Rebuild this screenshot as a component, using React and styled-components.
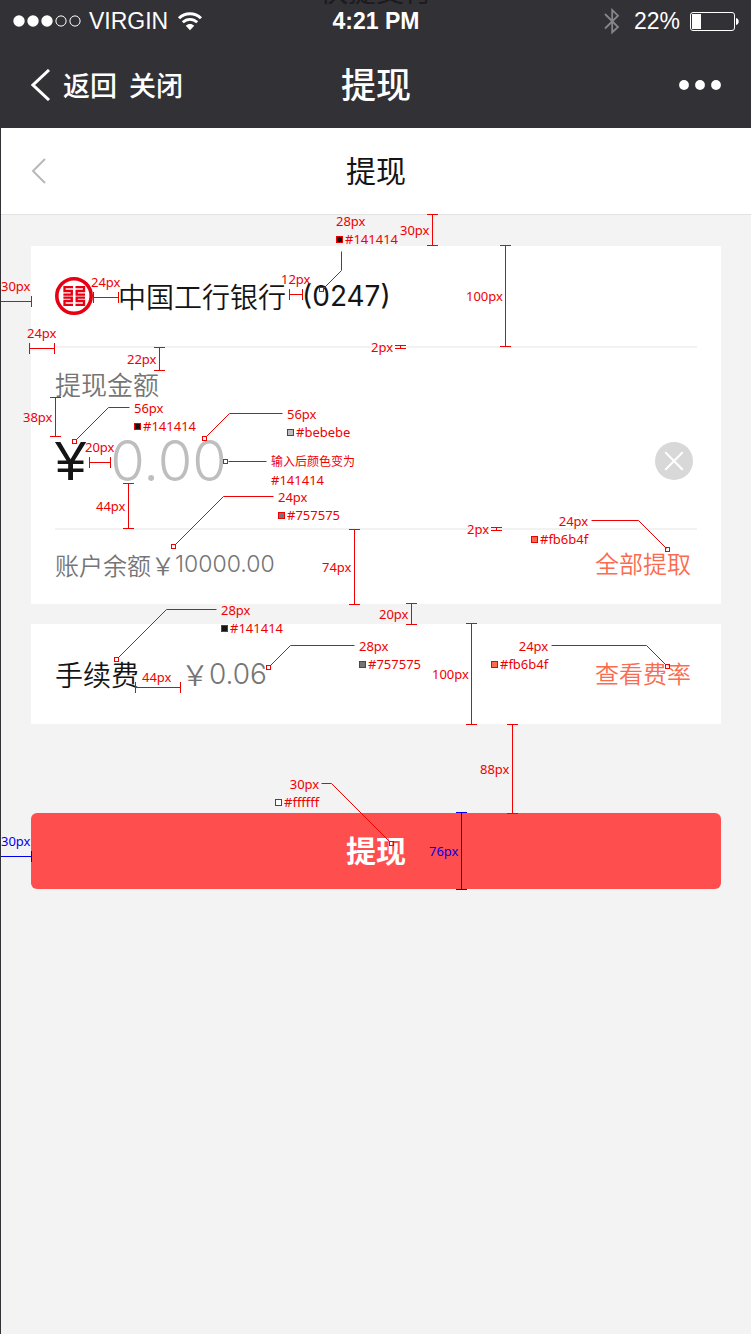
import React from "react";
import styled, { createGlobalStyle } from "styled-components";

const cjk = '"Noto Sans CJK SC", sans-serif';

const GlobalStyle = createGlobalStyle`
  *, *::before, *::after { box-sizing: border-box; }
  body { margin: 0; background: #f3f3f3; font-family: ${cjk}; color: #141414; }
  h1, h2, p { margin: 0; font-weight: 400; }
  button, input { font: inherit; color: inherit; border: 0; padding: 0; margin: 0; background: none; }
  a { color: inherit; text-decoration: none; }
  svg { display: block; flex: none; }
`;

const Page = styled.div`
  position: relative;
  min-height: 100vh;
  border-left: 1px solid #323136;
  overflow: hidden;
`;

const TopArea = styled.header`
  position: relative;
  background: #323136;
  color: #fff;
`;

const GhostTitle = styled.div`
  position: absolute;
  inset: 0 0 auto;
  height: 6px;
  overflow: hidden;
  display: flex;
  justify-content: center;
  align-items: flex-end;
  font-size: 28px;
  line-height: 32px;
  color: #1c1b1f;
`;

const Bar = styled.div`
  display: grid;
  grid-template-columns: 1fr auto 1fr;
  align-items: center;
  height: ${(p) => p.$height}px;
  padding: ${(p) => p.$pad};
`;

const StatusBar = styled(Bar)`
  font-family: "Liberation Sans", Arial, sans-serif;
  font-size: 23px;
  line-height: 28px;
`;

const Group = styled.div`
  display: flex;
  align-items: center;
  gap: ${(p) => p.$gap || 0}px;
  justify-content: ${(p) => (p.$end ? "flex-end" : "flex-start")};
`;

const Clock = styled.strong`
  font-weight: 700;
`;

const NavLink = styled.button`
  display: flex;
  align-items: center;
  gap: 12px;
  cursor: pointer;
  && { font-size: 27px; line-height: 40px; font-weight: 500; }
`;

const NavTitle = styled.h1`
  && { font-weight: 500; }
  padding-bottom: 4px;
  font-size: 35px;
  line-height: 52px;
`;

const SubHeader = styled(Bar)`
  background: #fff;
  border-bottom: 1px solid #e2e2e2;
`;

const SubTitle = styled.h2`
  padding-bottom: 4px;
  font-size: 30px;
  line-height: 44px;
`;

const Content = styled.main`
  padding: 31px 30px 40px;
`;

const Card = styled.section`
  background: #fff;
  padding: 0 24px;
  margin-bottom: 20px;
`;

const Row = styled.div`
  display: flex;
  align-items: center;
  height: ${(p) => p.$height}px;
  padding: 0 6px ${(p) => p.$lift || 0}px 0;
  font-size: ${(p) => p.$size}px;
  font-weight: 350;
  color: ${(p) => p.$color || "#141414"};
`;

const BankName = styled.span`
  margin: 0 16px 0 25px;
`;

const Digits = styled.span`
  font-family: Inter, ${cjk};
  font-weight: ${(p) => p.$weight || 400};
  font-size: ${(p) => p.$size}px;
`;

const FeeAmount = styled.span`
  display: flex;
  align-items: center;
  margin-left: 42px;
  color: #757575;
`;

const ActionLink = styled.a`
  margin-left: auto;
  padding-bottom: 4px;
  font-size: 24px;
  color: #fb6b4f;
`;

const AmountBlock = styled.div`
  height: 184px;
  padding-top: 17px;
  border-top: 2px solid #f2f2f2;
  border-bottom: 2px solid #f2f2f2;
`;

const AmountLabel = styled.label`
  display: block;
  font-size: 26px;
  line-height: 38px;
  font-weight: 350;
  color: #757575;
`;

const AmountRow = styled.div`
  display: flex;
  align-items: center;
  height: 72px;
  margin-top: 22px;
  padding-right: 4px;
`;

const Yen = styled.span`
  font-family: "Liberation Sans", Arial, sans-serif;
  font-size: 56px;
  line-height: 72px;
`;

const AmountInput = styled.input`
  flex: 1;
  min-width: 0;
  height: 72px;
  outline: none;
  && { margin-left: 24px; font-family: Inter, sans-serif; font-size: 56px; font-weight: 300; }
  &::placeholder { color: #bebebe; opacity: 1; }
`;

const IconButton = styled.button`
  cursor: pointer;
`;

const SubmitButton = styled.button`
  display: block;
  width: 100%;
  height: 76px;
  border-radius: 6px;
  cursor: pointer;
  && {
    margin-top: 89px;
    padding-bottom: 4px;
    background: #ff4e4e;
    color: #fff;
    font-size: 30px;
    font-weight: 700;
  }
`;

const NoteLayer = styled.div`
  position: absolute;
  inset: 0;
  margin-left: -1px;
  pointer-events: none;
  font-family: "Noto Sans", "Noto Sans CJK SC", sans-serif;
  font-size: 13px;
  line-height: 18px;
`;

const NoteLines = styled.svg`
  position: absolute;
  inset: 0;
  width: 100%;
  height: 100%;
`;

const Note = styled.div`
  position: absolute;
  left: ${(p) => p.$x}px;
  top: ${(p) => p.$y}px;
  display: flex;
  flex-direction: column;
  align-items: ${(p) => (p.$end ? "flex-end" : "flex-start")};
  color: ${(p) => p.$color || "#f00000"};
  white-space: nowrap;
`;

const NoteColor = styled.span`
  display: flex;
  align-items: center;
  gap: 2px;
`;

const NoteHint = styled.span`
  font-size: 12px;
`;

const Swatch = styled.i`
  width: 7px;
  height: 7px;
  border: 1px solid #f00000;
  background: ${(p) => p.$color};
`;

const RED = "#f00000";
const BLUE = "#0000f0";

const vertical = [
  [432, 214, 245], [505, 245, 346], [159, 347, 370], [55, 397, 436],
  [128, 483, 528], [354, 529, 604], [411, 603, 624], [471, 623, 724],
  [512, 724, 813], [400, 345, 348], [496, 527, 530], [461, 812, 889, BLUE],
];

const horizontal = [
  [301, 0, 31], [348, 29, 54], [297, 93, 118], [294, 289, 302],
  [462, 89, 110], [687, 135, 180], [856, 0, 31, BLUE],
];

const leaders = [
  ["341,251 341,270 323,288", 321, 289],
  ["129,407 108,407 76,439", 74, 441],
  ["282,413 229,413 206,436", 204, 438],
  ["266,461 228,461", 225, 461],
  ["273,496 223,496 175,544", 173, 546],
  ["591,520 638,520 666,548", 667, 549],
  ["216,609 166,609 118,657", 116, 659],
  ["354,645 290,645 270,665", 268, 667],
  ["551,645 646,645 665,664", 667, 666],
  ["321,783 331,783 389,841", 391, 843],
];

const notes = [
  { x: 336, y: 212, text: "28px", color: "#141414" },
  { x: 400, y: 221, text: "30px" },
  { x: 466, y: 287, text: "100px" },
  { x: 281, y: 270, text: "12px" },
  { x: 371, y: 338, text: "2px" },
  { x: 91, y: 273, text: "24px" },
  { x: 1, y: 277, text: "30px" },
  { x: 27, y: 324, text: "24px" },
  { x: 127, y: 350, text: "22px" },
  { x: 23, y: 408, text: "38px" },
  { x: 134, y: 399, text: "56px", color: "#141414" },
  { x: 85, y: 438, text: "20px" },
  { x: 96, y: 497, text: "44px" },
  { x: 287, y: 405, text: "56px", color: "#bebebe" },
  { x: 278, y: 488, text: "24px", color: "#757575" },
  { x: 322, y: 558, text: "74px" },
  { x: 467, y: 520, text: "2px" },
  { x: 531, y: 512, text: "24px", color: "#fb6b4f", end: true },
  { x: 221, y: 601, text: "28px", color: "#141414" },
  { x: 142, y: 668, text: "44px" },
  { x: 359, y: 637, text: "28px", color: "#757575" },
  { x: 379, y: 605, text: "20px" },
  { x: 432, y: 665, text: "100px" },
  { x: 491, y: 637, text: "24px", color: "#fb6b4f", end: true },
  { x: 480, y: 760, text: "88px" },
  { x: 275, y: 775, text: "30px", color: "#ffffff", end: true },
  { x: 429, y: 842, text: "76px", ink: BLUE },
  { x: 1, y: 832, text: "30px", ink: BLUE },
];

function Annotations() {
  return (
    <NoteLayer>
      <NoteLines fill="none" stroke={RED}>
        <g transform="translate(0.5 0.5)">
          {vertical.map(([x, a, b, c]) => (
            <path key={`v${x}-${a}`} stroke={c || RED} strokeLinecap="square"
              d={`M${x} ${a}V${b}M${x - 5} ${a}h10M${x - 5} ${b}h10`} />
          ))}
          {horizontal.map(([y, a, b, c]) => (
            <path key={`h${y}-${a}`} stroke={c || RED} strokeLinecap="square"
              d={`M${a} ${y}H${b}M${a} ${y - 5}v10M${b} ${y - 5}v10`} />
          ))}
          {leaders.map(([points, x, y]) => (
            <g key={points}>
              <polyline points={points} />
              <rect x={x - 2} y={y - 2} width="4" height="4" />
            </g>
          ))}
        </g>
      </NoteLines>
      {notes.map((n) => (
        <Note key={`${n.x}-${n.y}`} $x={n.x} $y={n.y} $end={n.end} $color={n.ink}>
          <span>{n.text}</span>
          {n.color && (
            <NoteColor><Swatch $color={n.color} />{n.color}</NoteColor>
          )}
        </Note>
      ))}
      <Note $x={271} $y={453}>
        <NoteHint>输入后颜色变为</NoteHint>
        <span>#141414</span>
      </Note>
    </NoteLayer>
  );
}

const Signal = () => (
  <svg width="68" height="12" viewBox="0 0 68 12" aria-hidden="true">
    {[6, 20, 34].map((x) => <circle key={x} cx={x} cy="6" r="5.7" fill="#fff" />)}
    {[48, 62].map((x) => <circle key={x} cx={x} cy="6" r="5.1" fill="none" stroke="#fff" />)}
  </svg>
);

const Wifi = () => (
  <svg width="26" height="19" viewBox="-2 0 26 19" fill="none" stroke="#fff" aria-hidden="true">
    <path d="M1 6.300C7 .1 17 .1 23 6.300" strokeWidth="3" />
    <path d="M4.800 10.300C9 6.300 15 6.300 19.200 10.300" strokeWidth="2.8" />
    <path d="M7.800 13.800C10.200 11.400 13.800 11.400 16.200 13.800L12 18.200Z" fill="#fff" stroke="none" />
  </svg>
);

const Bluetooth = () => (
  <svg width="20" height="27" viewBox="0 0 20 27" fill="none" stroke="#86868a" strokeWidth="1.8" aria-hidden="true">
    <path d="M1 6L14 19L8.200 24.500V2L14 7.700L1 20.500" />
  </svg>
);

const Battery = () => (
  <svg width="49" height="19" viewBox="0 0 49 19" aria-hidden="true">
    <rect x=".5" y=".5" width="44" height="18" rx="2.5" fill="none" stroke="#fff" />
    <rect x="2" y="2" width="9" height="15" fill="#fff" />
    <path d="M46 6C49.600 6.500 49.600 12.500 46 13Z" fill="#fff" />
  </svg>
);

const Chevron = ({ width, height, color, stroke }) => (
  <svg width={width} height={height} viewBox={`0 0 ${width} ${height}`} fill="none"
    stroke={color} strokeWidth={stroke} aria-hidden="true">
    <path d={`M${width - 2} 1L2 ${height / 2}L${width - 2} ${height - 1}`} />
  </svg>
);

const Dots = () => (
  <svg width="42" height="10" viewBox="0 0 42 10" fill="#fff" aria-hidden="true">
    <circle cx="5" cy="5" r="4.9" /><circle cx="21" cy="5" r="4.9" /><circle cx="37" cy="5" r="4.9" />
  </svg>
);

const BankLogo = () => (
  <svg width="38" height="38" viewBox="0 0 38 38" fill="none" stroke="#e60012" aria-hidden="true">
    <circle cx="19" cy="19" r="17.2" strokeWidth="3.6" />
    <g strokeWidth="2.3">
      <path d="M18 10.200H9.500V14H16.800V17.700H8.400" />
      <path d="M20.500 10.200H29V14H21.700V17.700H30" />
      <path d="M18 27.800H9.500V24H16.800V20.600H8.400" />
      <path d="M20.500 27.800H29V24H21.700V20.600H30" />
    </g>
  </svg>
);

const Clear = () => (
  <svg width="38" height="38" viewBox="0 0 38 38" aria-hidden="true">
    <circle cx="19" cy="19" r="19" fill="#d8d8d8" />
    <path d="M10.800 10.800L27.200 27.200M27.200 10.800L10.800 27.200" stroke="#fff" strokeWidth="2" strokeLinecap="round" />
  </svg>
);

export default function App() {
  return (
    <>
      <GlobalStyle />
      <Page>
        <TopArea>
          <GhostTitle>快捷支付</GhostTitle>
          <StatusBar $height={42} $pad="0 12px">
            <Group $gap={8}>
              <Signal />
              <span>VIRGIN</span>
              <Wifi />
            </Group>
            <Clock>4:21 PM</Clock>
            <Group $gap={10} $end>
              <Bluetooth />
              <span>22%</span>
              <Battery />
            </Group>
          </StatusBar>
          <Bar $height={86} $pad="0 30px">
            <Group $gap={12}>
              <NavLink type="button">
                <Chevron width={20} height={32} color="#fff" stroke={3} />
                返回
              </NavLink>
              <NavLink type="button">关闭</NavLink>
            </Group>
            <NavTitle>提现</NavTitle>
            <Group $end>
              <IconButton type="button" aria-label="更多"><Dots /></IconButton>
            </Group>
          </Bar>
        </TopArea>
        <SubHeader $height={87} $pad="0 30px">
          <Group>
            <IconButton type="button" aria-label="返回">
              <Chevron width={16} height={26} color="#b8b8b8" stroke={2} />
            </IconButton>
          </Group>
          <SubTitle>提现</SubTitle>
        </SubHeader>
        <Content>
          <Card>
            <Row $height={100} $size={28}>
              <BankLogo />
              <BankName>中国工行银行</BankName>
              <Digits $size={28}>(0247)</Digits>
            </Row>
            <AmountBlock>
              <AmountLabel htmlFor="amount">提现金额</AmountLabel>
              <AmountRow>
                <Yen>¥</Yen>
                <AmountInput id="amount" inputMode="decimal" placeholder="0.00" />
                <IconButton type="button" aria-label="清除"><Clear /></IconButton>
              </AmountRow>
            </AmountBlock>
            <Row $height={74} $size={24} $lift={6} $color="#757575">
              <span>账户余额￥</span>
              <Digits $size={23} $weight={300}>10000.00</Digits>
              <ActionLink href="#all">全部提取</ActionLink>
            </Row>
          </Card>
          <Card>
            <Row $height={100} $size={28}>
              <span>手续费</span>
              <FeeAmount>￥<Digits $size={28} $weight={300}>0.06</Digits></FeeAmount>
              <ActionLink href="#rates">查看费率</ActionLink>
            </Row>
          </Card>
          <SubmitButton type="button">提现</SubmitButton>
        </Content>
        <Annotations />
      </Page>
    </>
  );
}
